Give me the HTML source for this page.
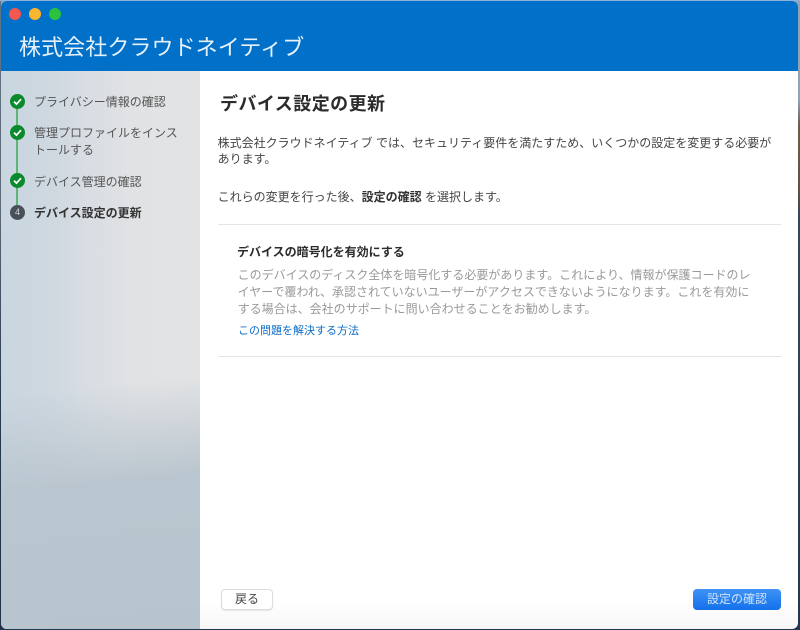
<!DOCTYPE html>
<html lang="ja"><head><meta charset="utf-8"><style>
html,body{margin:0;padding:0}
body{width:800px;height:630px;overflow:hidden;position:relative;background:linear-gradient(180deg,#90a4b8 0,#90a4b8 100px,#6d5c4a 125px,#5f5244 190px,#34475c 215px,#22364d 630px);font-family:"Liberation Sans","Noto Sans CJK JP",sans-serif;color:#333}
.a{position:absolute;white-space:nowrap}
#top{position:absolute;left:0;top:0;width:800px;height:1px;background:#8db3d9}
#lft{position:absolute;left:0;top:1px;width:1px;height:629px;background:linear-gradient(180deg,#5f7488 0,#5f6a78 200px,#263a52 400px,#1f3148 100%)}
#win{position:absolute;left:1px;top:1px;width:797px;height:628px;border-radius:6px;overflow:hidden;background:linear-gradient(180deg,#fff 0,#fff 600px,#f6f6f6 628px);filter:blur(.3px)}
#hd{position:absolute;left:0;top:0;width:797px;height:70px;background:#0070c9}
.dot{position:absolute;top:7px;width:12px;height:12px;border-radius:50%}
#side{position:absolute;left:0;top:70px;width:199px;height:558px;background:linear-gradient(174deg,rgba(186,198,207,0) 0,rgba(186,198,207,0) 56%,#bac6cf 73%,#b7c4ce 100%),linear-gradient(90deg,#c9d6e0 0,#ced8e0 25%,#d9dee3 45%,#e0e2e4 65%,#e2e3e4 80%)}
.t{font-size:12px;line-height:17px;color:#555}
.c{position:absolute;width:15px;height:15px;border-radius:50%;background:#0a8a2c}
.ln{position:absolute;left:15px;width:2px;background:#5fb573}
</style></head><body>
<div id="top"></div><div id="lft"></div>
<div id="win">
<div id="hd">
<div class="dot" style="left:8px;background:#f4574e"></div>
<div class="dot" style="left:28px;background:#fbb62d"></div>
<div class="dot" style="left:48px;background:#2cc23f"></div>
<div class="a" style="left:18px;top:30px;font-size:22px;line-height:34px;letter-spacing:.08px;color:#e6f1fa;font-weight:400">株式会社クラウドネイティブ</div>
</div>
<div id="side"></div>
<div class="ln" style="top:107px;height:18px"></div>
<div class="ln" style="top:138px;height:35px"></div>
<div class="ln" style="top:186px;height:19px"></div>
<div class="c" style="left:9px;top:93px"><svg width="15" height="15" viewBox="0 0 15 15"><path d="M4 7.6l2.5 2.5L11 5.2" fill="none" stroke="#fff" stroke-width="1.7"/></svg></div>
<div class="c" style="left:9px;top:124px"><svg width="15" height="15" viewBox="0 0 15 15"><path d="M4 7.6l2.5 2.5L11 5.2" fill="none" stroke="#fff" stroke-width="1.7"/></svg></div>
<div class="c" style="left:9px;top:172px"><svg width="15" height="15" viewBox="0 0 15 15"><path d="M4 7.6l2.5 2.5L11 5.2" fill="none" stroke="#fff" stroke-width="1.7"/></svg></div>
<div class="c" style="left:9px;top:204px;background:#4a5059;color:#d8dade;font-size:9px;line-height:15px;text-align:center">4</div>
<div class="a t" style="left:33px;top:93px">プライバシー情報の確認</div>
<div class="a t" style="left:33px;top:124px">管理プロファイルをインス<br>トールする</div>
<div class="a t" style="left:33px;top:173px">デバイス管理の確認</div>
<div class="a t" style="left:33px;top:204px;font-weight:700;color:#333">デバイス設定の更新</div>

<div class="a" style="left:219px;top:90px;font-size:18px;line-height:26px;letter-spacing:.45px;font-weight:700;color:#2b2b2b">デバイス設定の更新</div>
<div class="a t" style="left:216.6px;top:134px;color:#444;line-height:16px">株式会社クラウドネイティブ では、セキュリティ要件を満たすため、いくつかの設定を変更する必要が<br>あります。</div>
<div class="a t" style="left:216.6px;top:187.5px;color:#444">これらの変更を行った後、<b style="color:#333">設定の確認</b> を選択します。</div>
<div class="a" style="left:217px;top:223px;width:563px;height:1px;background:#e4e4e4"></div>
<div class="a t" style="left:236px;top:243px;font-weight:700;color:#2b2b2b">デバイスの暗号化を有効にする</div>
<div class="a t" style="left:236.6px;top:265.5px;color:#999">このデバイスのディスク全体を暗号化する必要があります。これにより、情報が保護コードのレ<br>イヤーで覆われ、承認されていないユーザーがアクセスできないようになります。これを有効に<br>する場合は、会社のサポートに問い合わせることをお勧めします。</div>
<div class="a" style="left:237px;top:322px;font-size:11px;line-height:17px;color:#0a6cc4">この問題を解決する方法</div>
<div class="a" style="left:217px;top:355px;width:563px;height:1px;background:#e4e4e4"></div>

<div class="a" style="left:220px;top:588px;width:50px;height:19px;border:1px solid #dcdcdc;border-radius:4px;background:#fff;box-shadow:0 1px 1px rgba(0,0,0,.08);font-size:12px;line-height:19px;text-align:center;color:#444">戻る</div>
<div class="a" style="left:692px;top:588px;width:88px;height:21px;border-radius:4px;background:linear-gradient(180deg,#3f93f5,#1270ea);font-size:12px;line-height:21px;text-align:center;color:#cfe3fb">設定の確認</div>
</div>
</body></html>
